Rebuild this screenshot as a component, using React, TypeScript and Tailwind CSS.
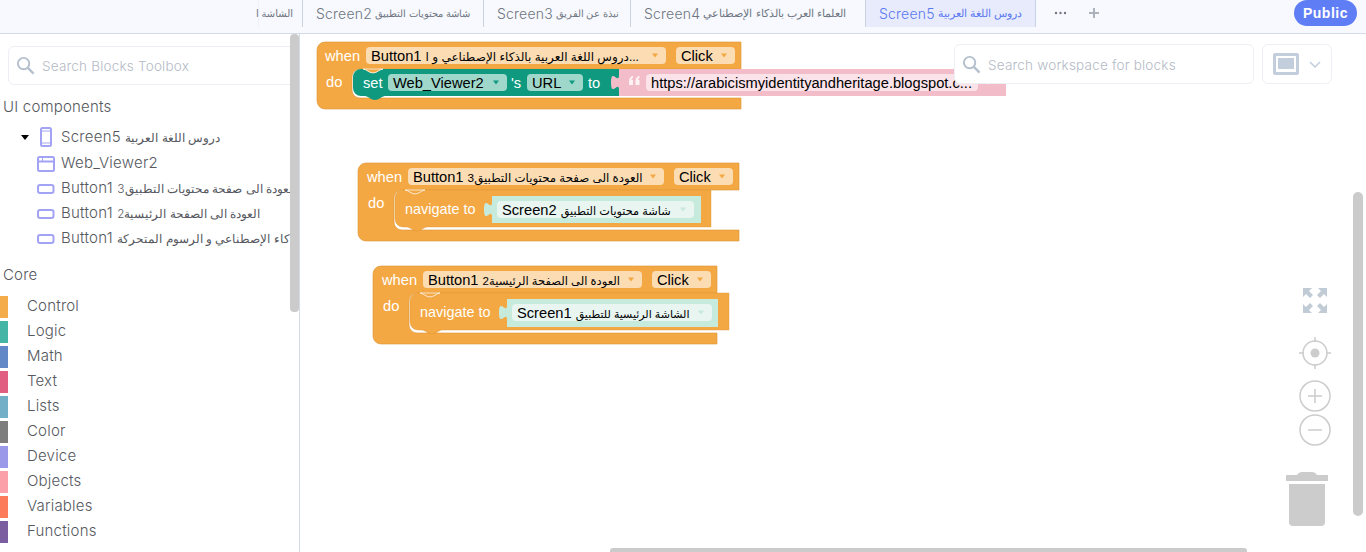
import React from "react";

const ui = "font-['Inter','DejaVu_Sans',sans-serif]";

function Tab({ latin, arabic, className = "", arClass }: { latin: string; arabic: string; className?: string; arClass: string }) {
  return (
    <div className={`flex h-[27px] items-center whitespace-nowrap border-r border-[#c9d2e0] text-[14px] font-light tracking-[0.2px] text-[#6f7682] ${className}`}>
      {latin} <span className={`tracking-normal ${arClass}`}>&nbsp;{arabic}</span>
    </div>
  );
}

function SearchIcon({ size = 20 }: { size?: number }) {
  return (
    <svg width={size} height={size} viewBox="0 0 20 20" fill="none" stroke="#b4bfcd" strokeWidth="2" className="shrink-0">
      <circle cx="8" cy="8" r="6" />
      <path d="M12.5 12.5 L18.5 18.5" strokeWidth="2.4" />
    </svg>
  );
}

function ButtonIcon() {
  return (
    <svg width="18" height="10" viewBox="0 0 18 10" fill="none" className="shrink-0">
      <rect x="1" y="1" width="15.5" height="8" rx="2" stroke="#a3a3f5" strokeWidth="2" />
    </svg>
  );
}

function SideAr({ children, className = "text-[12px]" }: { children: React.ReactNode; className?: string }) {
  return <span className={`tracking-normal ${className}`}>{children}</span>;
}

function TreeRow({ children, icon, h = "h-[25px]", text }: { children?: React.ReactNode; icon: React.ReactNode; h?: string; text: string }) {
  return (
    <div className={`flex ${h} items-center gap-[6px] pl-[37px] whitespace-nowrap text-[15px] font-light tracking-[0.25px] text-[#55585e]`}>
      <span className="flex w-[18px] shrink-0 justify-center">{icon}</span>
      <span>{text} {children}</span>
    </div>
  );
}

const cats: [string, string][] = [
  ["Control", "bg-[#f4ab4a]"],
  ["Logic", "bg-[#45b5a6]"],
  ["Math", "bg-[#6288c8]"],
  ["Text", "bg-[#e15f80]"],
  ["Lists", "bg-[#74afc8]"],
  ["Color", "bg-[#7d7d7d]"],
  ["Device", "bg-[#9a98e8]"],
  ["Objects", "bg-[#fb9fa8]"],
  ["Variables", "bg-[#fc7b5b]"],
  ["Functions", "bg-[#7a5ea0]"],
];

const ORANGE = "#f4a843";
const EDGE = "#dc9436";
const FONT = "'Liberation Sans','DejaVu Sans',sans-serif";

function Txt({ x, y, fill = "#000", children, size = 14.67 }: { x: number; y: number; fill?: string; children: React.ReactNode; size?: number }) {
  return (
    <text x={x} y={y} fill={fill} fontSize={size} fontFamily={FONT} xmlSpace="preserve">
      {children}
    </text>
  );
}

function Chip({ x, y, w, h = 17, fill, arrow, children }: { x: number; y: number; w: number; h?: number; fill: string; arrow?: string; children: React.ReactNode }) {
  const ax = x + w - 14;
  const ay = y + h / 2 - 2;
  return (
    <g>
      <rect x={x} y={y} width={w} height={h} rx={4} fill={fill} />
      <Txt x={x + 5} y={y + 14}>{children}</Txt>
      {arrow && <path d={`M${ax},${ay} h6 l-3,4 z`} fill={arrow} />}
    </g>
  );
}

const A = ({ children, s = 12 }: { children: React.ReactNode; s?: number }) => <tspan fontSize={s}>{children}</tspan>;

function hat(x: number, y: number, r1: number, y1: number, sx: number, y2: number, y3: number, r3: number) {
  return `M${x + 8},${y} H${r1} V${y1} H${sx + 8} a8,8 0 0 0 -8,8 V${y2 - 8} a8,8 0 0 0 8,8 H${r3} V${y3} H${x + 8} a8,8 0 0 1 -8,-8 V${y + 8} a8,8 0 0 1 8,-8 Z`;
}

function stmt(x: number, y: number, r: number, b: number) {
  return `M${x + 8},${y} H${x + 10} c3,0 6,4 10,4 s7,-4 10,-4 H${r} V${b} H${x + 32} c-3,0 -6,4 -10,4 s-7,-4 -10,-4 H${x + 8} a8,8 0 0 1 -8,-8 V${y + 8} a8,8 0 0 1 8,-8 Z`;
}

function Notch({ x, y, line = "#ffffff" }: { x: number; y: number; line?: string }) {
  return <path d={`M${x + 10},${y} c3,0 6,4 10,4 s7,-4 10,-4 z`} fill={ORANGE} stroke={line} strokeWidth="0.7" />;
}

function socket(x: number, y: number, r: number, b: number) {
  return `M${x},${y} V${y + 6} c0,10 -8,-8 -8,7.5 s8,-2.500 8,7.500 V${b} H${r} V${y} Z`;
}

function Blocks() {
  return (
    <svg width="1066" height="518" viewBox="300 34 1066 518" className="absolute inset-0">
      {/* block 1 */}
      <path d={hat(317, 42, 741, 69, 352, 98, 109, 741)} fill={ORANGE} stroke={EDGE} strokeWidth="0.6" />
      <path d={stmt(353, 69, 620, 96)} fill="#0f9a80" />
      <Notch x={353} y={69} />
      <path d={socket(619, 69, 1006, 96)} fill="#f2bcc8" />
      <Txt x={325} y={61} fill="#fff">when</Txt>
      <Txt x={326} y={87} fill="#fff">do</Txt>
      <Chip x={366} y={47} w={300} fill="#fbdcb3" arrow="#f4a843">Button1 <A>دروس اللغة العربية بالذكاء الإصطناعي و ا...</A></Chip>
      <Chip x={676} y={47} w={59} fill="#fbdcb3" arrow="#f4a843">Click</Chip>
      <Txt x={363} y={88} fill="#fff">set</Txt>
      <Chip x={388} y={74} w={119} fill="#9fd8cb" arrow="#0f9a80">Web_Viewer2</Chip>
      <Txt x={511} y={88} fill="#fff">'s</Txt>
      <Chip x={527} y={74} w={56} fill="#9fd8cb" arrow="#0f9a80">URL</Chip>
      <Txt x={588} y={88} fill="#fff">to</Txt>
      <path d="M629,85 v-4 c0,-3 2,-5 4,-5 v2 c-1,0 -1.500,1 -1.500,2 h1.500 v5 z M635.500,85 v-4 c0,-3 2,-5 4,-5 v2 c-1,0 -1.500,1 -1.500,2 h1.500 v5 z" fill="#fdf3f5" />
      <Chip x={646} y={74} w={332} fill="#fae4e9">https://arabicismyidentityandheritage.blogspot.c...</Chip>
      <path d="M985,81 h6 l-3,4 z" fill="#f7d8df" />

      {/* block 2 */}
      <path d={hat(358, 163, 739, 190, 394, 230, 241, 739)} fill={ORANGE} stroke={EDGE} strokeWidth="0.6" />
      <path d={stmt(395, 190, 711, 227)} fill={ORANGE} stroke={EDGE} strokeWidth="0.4" />
      <Notch x={395} y={190} />
      <path d={socket(492, 196, 701, 223)} fill="#c6eadb" />
      <Txt x={367} y={182} fill="#fff">when</Txt>
      <Txt x={368} y={208} fill="#fff">do</Txt>
      <Chip x={408} y={168} w={256} fill="#fbdcb3" arrow="#f4a843">Button1 <A s={11.8}>العودة الى صفحة محتويات التطبيق3</A></Chip>
      <Chip x={674} y={168} w={59} fill="#fbdcb3" arrow="#f4a843">Click</Chip>
      <Txt x={405} y={214} fill="#fff" size={14.4}>navigate to</Txt>
      <Chip x={497} y={201} w={197} fill="#e8f5f0" arrow="#c6eadb">Screen2 <A s={11.3}>شاشة محتويات التطبيق</A></Chip>

      {/* block 3 */}
      <path d={hat(373, 266, 717, 293, 409, 333, 344, 717)} fill={ORANGE} stroke={EDGE} strokeWidth="0.6" />
      <path d={stmt(410, 293, 729, 330)} fill={ORANGE} stroke={EDGE} strokeWidth="0.4" />
      <Notch x={410} y={293} />
      <path d={socket(507, 299, 718, 327)} fill="#c6eadb" />
      <Txt x={382} y={285} fill="#fff">when</Txt>
      <Txt x={383} y={311} fill="#fff">do</Txt>
      <Chip x={423} y={271} w={219} fill="#fbdcb3" arrow="#f4a843">Button1 <A s={11.5}>العودة الى الصفحة الرئيسية2</A></Chip>
      <Chip x={652} y={271} w={59} fill="#fbdcb3" arrow="#f4a843">Click</Chip>
      <Txt x={420} y={317} fill="#fff" size={14.4}>navigate to</Txt>
      <Chip x={512} y={304} w={200} fill="#e8f5f0" arrow="#c6eadb">Screen1 <A s={11}>الشاشة الرئيسية للتطبيق</A></Chip>
    </svg>
  );
}

function Controls() {
  return (
    <svg width="70" height="260" viewBox="0 0 70 260" fill="none" className="absolute right-[33px] top-[250px]">
      <g fill="#c0cbd5" transform="translate(40,4)">
        <path d="M0,0 h9 l-3,3 l4,4 l-3,3 l-4,-4 l-3,3 z" />
        <path d="M24,0 h-9 l3,3 l-4,4 l3,3 l4,-4 l3,3 z" />
        <path d="M0,25 h9 l-3,-3 l4,-4 l-3,-3 l-4,4 l-3,-3 z" />
        <path d="M24,25 h-9 l3,-3 l-4,-4 l3,-3 l4,4 l3,-3 z" />
      </g>
      <g stroke="#cccccc" strokeWidth="1.500">
        <circle cx="52" cy="69" r="12" />
        <path d="M52,53 v5 M52,80 v5 M36,69 h5 M63,69 h5" />
        <circle cx="52" cy="69" r="4.500" fill="#cccccc" stroke="none" />
        <circle cx="52" cy="112" r="15" />
        <path d="M45,112 h14 M52,105 v14" />
        <circle cx="52" cy="146" r="15" />
        <path d="M45,146 h14" />
      </g>
      <g fill="#cccccc">
        <path d="M23,191 h11 c1,-2 3,-3 5,-3 h10 c2,0 4,1 5,3 h11 v6 h-42 z" />
        <path d="M26,200 h36 v38 a4,4 0 0 1 -4,4 h-28 a4,4 0 0 1 -4,-4 z" />
      </g>
    </svg>
  );
}

export default function App() {
  return (
    <div className={`flex h-[552px] w-[1366px] flex-col overflow-hidden bg-white ${ui}`}>
      <header className="flex h-[34px] shrink-0 border-b border-[#d3dbe8] bg-[#f7f9fe]">
        <div className="ml-[258px] flex h-[27px] w-[45px] items-center justify-end border-r border-[#c9d2e0] border-l-[#eef1f7] border-l pr-[9px] whitespace-nowrap text-[10px] text-[#6f7682]">الشاشة ا</div>
        <Tab latin="Screen2" arabic="شاشة محتويات التطبيق" arClass="text-[10.300px]" className="w-[181px] pl-[13px]" />
        <Tab latin="Screen3" arabic="نبذة عن الفريق" arClass="text-[10px]" className="w-[147px] pl-[13px]" />
        <Tab latin="Screen4" arabic="العلماء العرب بالذكاء الإصطناعي" arClass="text-[11.300px]" className="w-[235px] pl-[13px]" />
        <div className="flex h-[27px] w-[170px] items-center whitespace-nowrap border-r border-[#c9d2e0] bg-[#e8ebfb] pl-[13px] text-[14px] font-light tracking-[0.2px] text-[#5b79f0]">
          Screen5 <span className="text-[11px] tracking-normal">&nbsp;دروس اللغة العربية</span>
        </div>
        <div className="ml-[18px] flex h-[26px] items-center">
          <svg width="14" height="4" viewBox="0 0 14 4" fill="#6f7682"><circle cx="2" cy="2" r="1.200" /><circle cx="6.500" cy="2" r="1.200" /><circle cx="11" cy="2" r="1.200" /></svg>
        </div>
        <div className="ml-[20px] flex h-[26px] items-center">
          <svg width="12" height="12" viewBox="0 0 12 12" stroke="#adb3bd" strokeWidth="2"><path d="M6,1 v10 M1,6 h10" /></svg>
        </div>
        <div className="ml-[194px] flex h-[26px] w-[63px] items-center justify-center rounded-full bg-[#5f7df5] font-['Liberation_Sans',sans-serif] text-[14px] font-bold tracking-[0.5px] text-white">Public</div>
      </header>

      <div className="relative flex min-h-0 flex-1">
        <aside className="relative w-[300px] shrink-0 overflow-hidden border-r border-[#d3dbe8] bg-white">
          <div className="ml-[8px] mt-[12px] flex h-[39px] w-[300px] items-center gap-[7px] rounded-[6px] border border-[#eceff4] pl-[7px] text-[13.5px] font-light tracking-[0.2px] text-[#b4bac6]">
            <SearchIcon size={19} />
            <span className="pt-[2px]">Search Blocks Toolbox</span>
          </div>
          <div className="mt-[10px] h-[24px] pl-[3px] text-[15px] font-light leading-[24px] tracking-[0.2px] text-[#55585e]">UI components</div>
          <div className="mt-[5px]">
            <div className="mb-[1px] flex h-[26px] items-center pl-[21px] whitespace-nowrap text-[15px] font-light tracking-[0.25px] text-[#55585e]">
              <span className="mr-[10px] h-0 w-0 border-x-[4px] border-t-[5px] border-x-transparent border-t-black" />
              <svg width="14" height="20" viewBox="0 0 14 20" fill="none" stroke="#a3a3f5" strokeWidth="2" className="mr-[8px]">
                <rect x="2" y="1" width="10" height="18" rx="1.500" />
                <path d="M2,4 h10 M2,16 h10" strokeWidth="1.200" />
              </svg>
              <span>Screen5 <SideAr>دروس اللغة العربية</SideAr></span>
            </div>
            <TreeRow text="Web_Viewer2" h="h-[25px]" icon={
              <svg width="18" height="16" viewBox="0 0 18 16" fill="none" stroke="#a3a3f5" strokeWidth="2"><rect x="1" y="1" width="16" height="14" rx="1.500" /><path d="M1,5.500 h16" /><path d="M5.500,1 v4" strokeWidth="1" /></svg>
            } />
            <TreeRow text="Button1" icon={<ButtonIcon />}><SideAr>العودة الى صفحة محتويات التطبيق3</SideAr></TreeRow>
            <TreeRow text="Button1" icon={<ButtonIcon />}><SideAr className="text-[11.600px]">العودة الى الصفحة الرئيسية2</SideAr></TreeRow>
            <TreeRow text="Button1" icon={<ButtonIcon />}><SideAr>دروس اللغة العربية بالذكاء الإصطناعي و الرسوم المتحركة</SideAr></TreeRow>
          </div>
          <div className="mt-[12px] h-[24px] pl-[3px] text-[15px] font-light leading-[24px] tracking-[0.2px] text-[#55585e]">Core</div>
          <div className="mt-[9px] flex flex-col gap-[3px]">
            {cats.map(([name, color]) => (
              <div key={name} className="flex h-[22px] items-center text-[15px] font-light tracking-[0.2px] text-[#55585e]">
                <span className={`mr-[19px] h-[22px] w-[8px] ${color}`} />
                <span className="-mt-[1px]">{name}</span>
              </div>
            ))}
          </div>
          <div className="absolute right-0 top-0 h-[278px] w-[9px] rounded-[4px] bg-[#cbcbcb]" />
        </aside>

        <main className="relative min-w-0 flex-1">
          <Blocks />
          <div className="absolute left-[654px] top-[10px] flex h-[40px] w-[300px] items-center gap-[7px] rounded-[6px] border border-[#eceff4] bg-white pl-[7px] text-[13.5px] font-light tracking-[0.2px] text-[#b4bac6]">
            <SearchIcon size={19} />
            <span className="pt-[2px]">Search workspace for blocks</span>
          </div>
          <div className="absolute left-[962px] top-[10px] flex h-[40px] w-[70px] items-center gap-[10px] rounded-[6px] border border-[#eceff4] bg-white pl-[10px]">
            <svg width="26" height="22" viewBox="0 0 26 22" fill="#c3cedc"><path fillRule="evenodd" d="M2,0 h22 a2,2 0 0 1 2,2 v18 a2,2 0 0 1 -2,2 h-22 a2,2 0 0 1 -2,-2 v-18 a2,2 0 0 1 2,-2 z M3,3 v16 h20 v-16 z" /><rect x="5" y="5" width="16" height="11" /></svg>
            <svg width="12" height="7" viewBox="0 0 12 7" fill="none" stroke="#c3cedc" strokeWidth="1.500"><path d="M1,1 L6,6 L11,1" /></svg>
          </div>
          <Controls />
          <div className="absolute left-[1053px] top-[158px] h-[324px] w-[10px] rounded-[5px] bg-[#cbcbcb]" />
          <div className="absolute bottom-0 left-[310px] h-[4px] w-[637px] rounded-t-[3px] bg-[#cbcbcb]" />
        </main>
      </div>
    </div>
  );
}
